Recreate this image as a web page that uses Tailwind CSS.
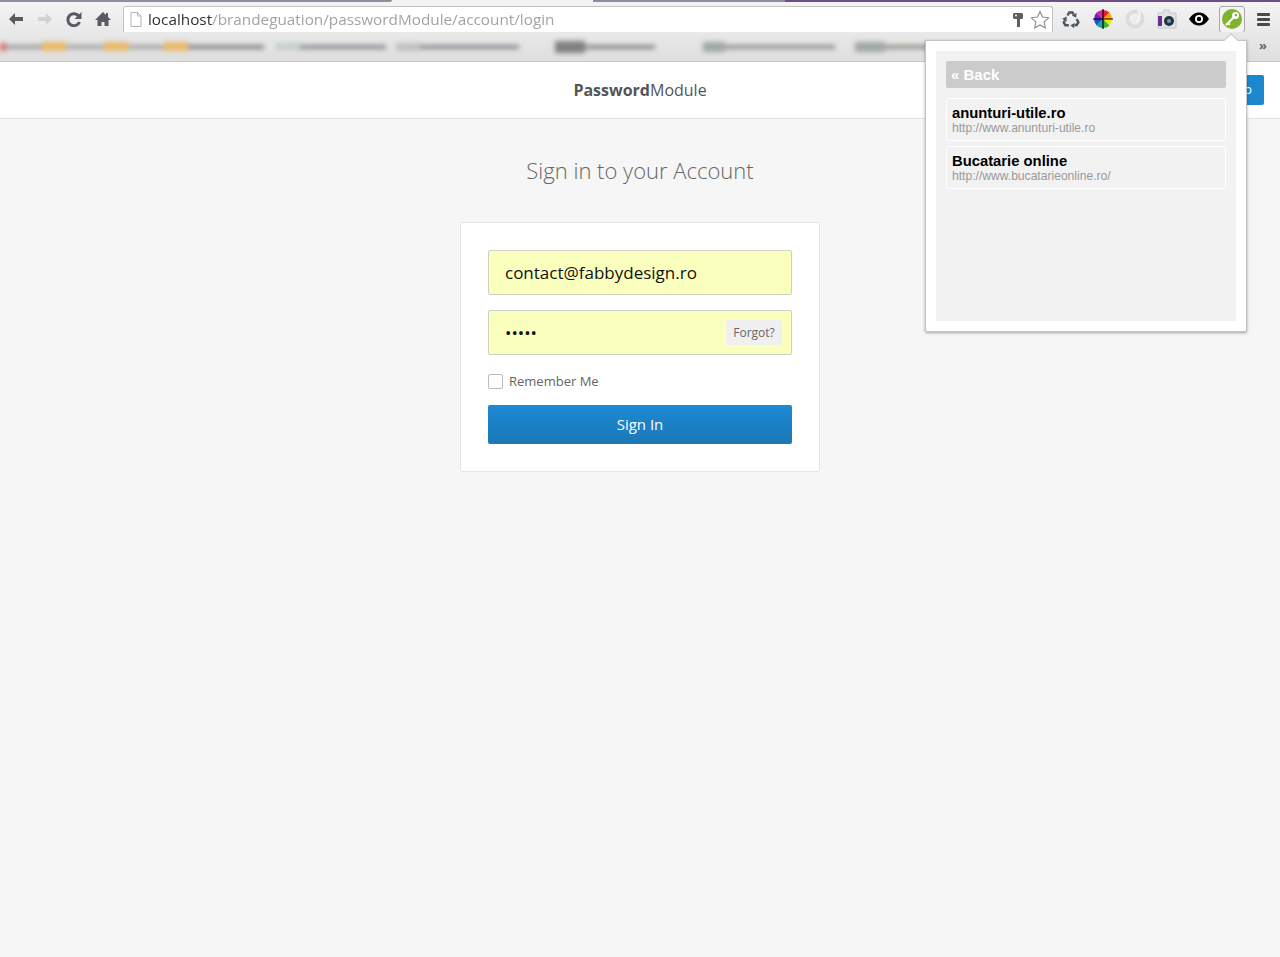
<!DOCTYPE html>
<html lang="en">
<head>
    <meta charset="UTF-8">
    <meta name="viewport" content="width=device-width, initial-scale=1.0">
    <title>Sign in</title>
    <script src="https://cdn.jsdelivr.net/npm/@tailwindcss/browser@4"></script>
</head>
<body class="relative bg-[#f6f6f6] min-h-[957px] font-['Open_Sans',sans-serif] overflow-hidden">

    <!-- browser chrome -->
    <div class="h-[32px] relative bg-gradient-to-b from-[#f4f4f4] to-[#e9e9e9] flex items-start pt-[6px] pl-[8px]">
        <div class="absolute top-0 left-0 w-[392px] h-[2px] bg-[#8f8c9c] rounded-br-sm"></div>
        <div class="absolute top-0 left-[593px] w-[687px] h-[2px] bg-[#8f8c9c]"></div>
        <div class="absolute top-0 left-[785px] w-[495px] h-[2px] bg-[#6b4f86]"></div>

        <div class="flex items-center h-[26px] gap-[13px] blur-[0.6px] w-[115px] shrink-0">
            <svg class="w-[16px] h-[14px]" viewBox="0 0 16 14"><path d="M7 1 1 7l6 6V9h8V5H7z" fill="#5a5a62"/></svg>
            <svg class="w-[16px] h-[14px]" viewBox="0 0 16 14"><path d="M9 1l6 6-6 6V9H1V5h8z" fill="#d2d2d2"/></svg>
            <svg class="w-[16px] h-[16px]" viewBox="0 0 16 16"><path d="M13 5.500A6 6 0 1 0 13.500 11" fill="none" stroke="#5a5a62" stroke-width="3"/><path d="M15.500 1v7h-7z" fill="#5a5a62"/></svg>
            <svg class="w-[16px] h-[16px]" viewBox="0 0 16 16"><path d="M8 1 0 9h2.500v6h4v-4h3v4h4V9H16l-3-3V2h-2v2z" fill="#5a5a62"/></svg>
        </div>

        <div class="w-[930px] h-[26px] bg-white border border-[#c2c2c2] border-b-0 rounded-t-[3px] flex items-center pl-[6px] pr-[2px] shrink-0">
            <svg class="w-[12px] h-[15px] blur-[0.4px] shrink-0" viewBox="0 0 12 15"><path d="M1 .5h6.500L11 4v10.500H1zM7.500.5V4H11" fill="#fff" stroke="#b5b5b5"/></svg>
            <span class="ml-[6px] -mt-[2px] text-[15.300px] leading-[26px] text-[#a3a3a3] blur-[0.7px] whitespace-nowrap"><span class="text-[#333]">localhost</span>/brandeguation/passwordModule/account/login</span>
            <svg class="ml-auto mr-[3px] w-[12px] h-[16px]" viewBox="0 0 12 16"><path d="M2 1h8l1 1v4l-1 1H8v8H5V7H2L1 6V2z" fill="#5f5f5f"/><circle cx="4" cy="3.500" r="1" fill="#fff"/></svg>
            <svg class="ml-[3px] w-[20px] h-[20px]" viewBox="0 0 20 20"><path d="M10 1.500l2.600 5.600 6 .7-4.500 4.100 1.200 6L10 15l-5.300 2.900 1.200-6L1.400 7.800l6-.7z" fill="#fff" stroke="#8a8a8a" stroke-width="1.100"/></svg>
        </div>

        <div class="flex items-center h-[26px] ml-[7px]">
            <svg class="w-[20px] h-[20px] ml-[1px]" viewBox="0 0 20 20" fill="#4a5660" stroke="#4a5660">
                <g><path d="M6.500 6.500l1.700-3h3.300l1.100 2" fill="none" stroke-width="2.400"/><path d="M15.500 4l-.3 4.800-4.300-2.200z" stroke="none"/></g>
                <g transform="rotate(120 10 11)"><path d="M6.500 6.500l1.700-3h3.300l1.100 2" fill="none" stroke-width="2.400"/><path d="M15.500 4l-.3 4.800-4.300-2.200z" stroke="none"/></g>
                <g transform="rotate(240 10 11)"><path d="M6.500 6.500l1.700-3h3.300l1.100 2" fill="none" stroke-width="2.400"/><path d="M15.500 4l-.3 4.800-4.300-2.200z" stroke="none"/></g>
            </svg>
            <svg class="w-[20px] h-[20px] ml-[12px]" viewBox="0 0 20 20">
                <path d="M10 10V1a9 9 0 0 1 6.400 2.600z" fill="#e8232a"/>
                <path d="M10 10l6.400-6.400A9 9 0 0 1 19 10z" fill="#f7a600"/>
                <path d="M10 10h9a9 9 0 0 1-2.600 6.400z" fill="#f4ea00"/>
                <path d="M10 10l6.400 6.400A9 9 0 0 1 10 19z" fill="#3cb52e"/>
                <path d="M10 10v9a9 9 0 0 1-6.400-2.600z" fill="#16a7a0"/>
                <path d="M10 10l-6.400 6.400A9 9 0 0 1 1 10z" fill="#1a4fd0"/>
                <path d="M10 10H1a9 9 0 0 1 2.600-6.400z" fill="#7a1fc0"/>
                <path d="M10 10 3.600 3.600A9 9 0 0 1 10 1z" fill="#e61fa0"/>
                <path d="M10 0v20M0 10h20" stroke="#000" stroke-width="1.200"/>
            </svg>
            <svg class="w-[20px] h-[22px] ml-[12px] blur-[0.3px]" viewBox="0 0 20 22" fill="none"><circle cx="10" cy="11" r="7.500" stroke="#dcdcdc" stroke-width="4"/><path d="M13 3c3 3 2 8-2 12" stroke="#f4f4f4" stroke-width="2"/></svg>
            <svg class="w-[20px] h-[20px] ml-[12px]" viewBox="0 0 20 20"><path d="M1 4h5l1-3h5l1 3h6v15H1z" fill="#dfe4e8" stroke="#b8bec4" stroke-width=".8"/><rect x="1" y="7" width="4" height="10" fill="#6b2d8e"/><circle cx="12" cy="12" r="5" fill="#24323e"/><circle cx="12" cy="12" r="2" fill="#6f9fc0"/></svg>
            <svg class="w-[20px] h-[14px] ml-[12px]" viewBox="0 0 20 14"><path d="M0 7c3-4.500 6-6.500 10-6.500S17 2.500 20 7c-3 4.500-6 6.500-10 6.500S3 11.500 0 7z" fill="#000"/><circle cx="10" cy="7" r="4" fill="#fff"/><circle cx="10" cy="7" r="2.200" fill="#000"/></svg>
            <div class="w-[26px] h-[27px] ml-[10px] bg-[#f3f3f3] border border-[#a9a9a9] rounded-[3px] flex items-center justify-center">
                <svg class="w-[20px] h-[20px]" viewBox="0 0 20 20"><circle cx="10" cy="10" r="10" fill="#7fb32d"/><circle cx="13.500" cy="6.500" r="3.500" fill="#fff"/><path d="M11.500 7 3 15.500l1.500 1.500 1.500-1.500 1 1 1.500-1.500-1-1 5-5z" fill="#fff"/><circle cx="14" cy="6" r="1.200" fill="#7fb32d"/></svg>
            </div>
            <div class="w-[13px] ml-[12px] flex flex-col gap-[2px]">
                <div class="h-[3px] bg-[#4a4a4a] rounded-[1px]"></div>
                <div class="h-[3px] bg-[#4a4a4a] rounded-[1px]"></div>
                <div class="h-[3px] bg-[#4a4a4a] rounded-[1px]"></div>
            </div>
        </div>
    </div>

    <!-- bookmarks bar, blurred in the source -->
    <div class="h-[30px] bg-gradient-to-b from-[#e9e9e9] to-[#dedede] border-b border-[#c9c9c9] relative overflow-hidden flex items-center">
        <div class="flex items-center h-[10px] blur-[2.500px] w-[930px] shrink-0">
            <div class="w-[6px] h-[8px] bg-[#d9706a]"></div>
            <div class="w-[36px] h-[4px] bg-[#999]"></div>
            <div class="w-[24px] h-[9px] bg-[#eab96a]"></div>
            <div class="w-[38px] h-[4px] bg-[#a0a0a0]"></div>
            <div class="w-[24px] h-[9px] bg-[#eab96a]"></div>
            <div class="w-[36px] h-[4px] bg-[#a0a0a0]"></div>
            <div class="w-[24px] h-[9px] bg-[#eab96a]"></div>
            <div class="w-[76px] h-[4px] bg-[#808080]"></div>
            <div class="w-[24px] ml-[12px] h-[7px] bg-[#c4cfc8]"></div>
            <div class="w-[86px] h-[4px] bg-[#868890]"></div>
            <div class="w-[24px] ml-[10px] h-[8px] bg-[#c0c0c0]"></div>
            <div class="w-[100px] h-[4px] bg-[#868890]"></div>
            <div class="w-[30px] ml-[36px] h-[12px] bg-[#808080]"></div>
            <div class="w-[70px] h-[4px] bg-[#858585]"></div>
            <div class="w-[22px] ml-[48px] h-[10px] bg-[#a0a5a5]"></div>
            <div class="w-[110px] h-[4px] bg-[#8e8e8e]"></div>
            <div class="w-[30px] ml-[20px] h-[10px] bg-[#a0a5a5]"></div>
            <div class="w-[45px] h-[4px] bg-[#8e8e88]"></div>
        </div>
        <span class="absolute left-[1259px] top-[3px] text-[13px] font-bold leading-[20px] text-[#666]">»</span>
    </div>

    <!-- app nav -->
    <div class="relative h-[57px] bg-white border-b border-[#e3e3e3] flex items-center justify-center">
        <p class="text-[16px] text-[#555]"><span class="font-bold">Password</span>Module</p>
        <div class="absolute left-[1206px] top-[13px] w-[58px] h-[30px] bg-[#1c87cf] rounded-[2px] flex items-center justify-end pr-[12px] text-[13px] text-white">p</div>
    </div>

    <!-- login -->
    <div class="flex flex-col items-center">
        <h1 class="mt-[33px] text-[22px] leading-[36px] font-light text-[#666]">Sign in to your Account</h1>
        <div class="mt-[34px] w-[360px] h-[250px] bg-white border border-[#e5e5e5] rounded-[2px] p-[27px]">
            <input class="block w-full h-[45px] bg-[#fbffbd] border border-[#cfcfc4] rounded-[2px] px-[16px] text-[17px] text-[#111]" type="text" value="contact@fabbydesign.ro">
            <div class="relative mt-[15px]">
                <input class="block w-full h-[45px] bg-[#fbffbd] border border-[#cfcfc4] rounded-[2px] px-[16px] text-[17px] text-[#111]" type="password" value="12345">
                <span class="absolute right-[10px] top-[10px] w-[56px] h-[25px] bg-[#f0f0f0] rounded-[2px] text-[12px] leading-[25px] text-center text-[#666]">Forgot?</span>
            </div>
            <label class="mt-[19px] h-[15px] flex items-center text-[13px] text-[#666]">
                <span class="w-[15px] h-[15px] bg-white border border-[#bbb] rounded-[2px]"></span>
                <span class="ml-[6px]">Remember Me</span>
            </label>
            <button class="mt-[16px] block w-full h-[39px] bg-gradient-to-b from-[#1c8ad4] to-[#1b77b7] rounded-[2px] text-[15px] text-white">Sign In</button>
        </div>
    </div>

    <!-- extension popup -->
    <div class="absolute left-[925px] top-[40px] w-[322px] h-[292px] bg-white border border-[#c4c4c4] rounded-b-[2px] shadow-[0_1px_3px_rgba(0,0,0,0.35)] p-[10px] font-['Liberation_Sans',sans-serif]">
        <div class="absolute -top-[6px] left-[300px] w-[10px] h-[10px] bg-white border-l border-t border-[#c4c4c4] rotate-45"></div>
        <div class="h-full bg-[#f2f2f2] p-[10px]">
            <div class="h-[27px] bg-[#cbcbcb] rounded-[2px] pl-[5px] text-[15px] leading-[27px] font-bold text-white">« Back</div>
            <div class="mt-[10px] h-[43px] border border-white rounded-[2px] pl-[5px] pt-[7px]">
                <p class="text-[14.800px] leading-[15px] font-bold text-black">anunturi-utile.ro</p>
                <p class="text-[12.100px] leading-[14px] text-[#999]">http://www.anunturi-utile.ro</p>
            </div>
            <div class="mt-[5px] h-[43px] border border-white rounded-[2px] pl-[5px] pt-[7px]">
                <p class="text-[14.800px] leading-[15px] font-bold text-black">Bucatarie online</p>
                <p class="text-[12.100px] leading-[14px] text-[#999]">http://www.bucatarieonline.ro/</p>
            </div>
        </div>
    </div>
</body>
</html>
